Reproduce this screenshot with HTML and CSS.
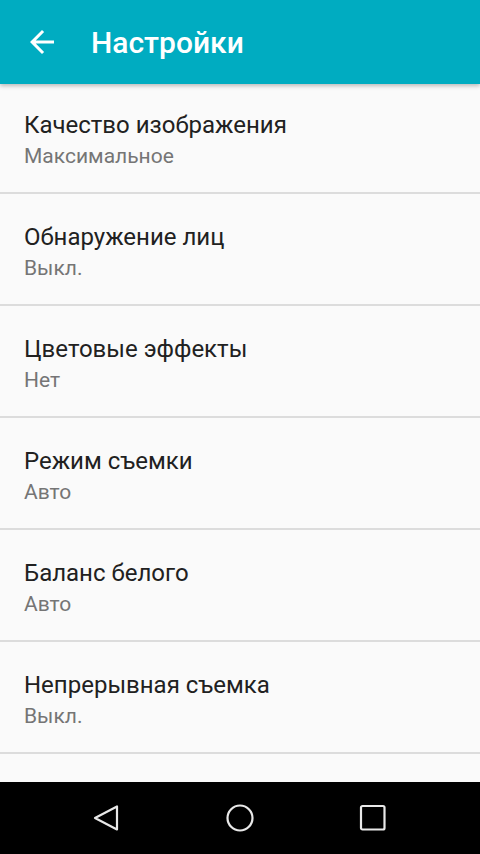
FILE: index.html
```html
<!DOCTYPE html>
<html lang="ru">
<head>
  <meta charset="UTF-8" />
  <meta name="viewport" content="width=device-width, initial-scale=1.0"/>
  <title>Настройки</title>
  <link rel="stylesheet" href="styles.css">
</head>
<body>
  <div class="screen">
    <header class="appbar">
      <svg class="back" viewBox="0 0 24 24" width="36" height="36">
        <path d="M20 11H7.83l5.59-5.59L12 4l-8 8 8 8 1.41-1.41L7.83 13H20v-2z" fill="#fff"/>
      </svg>
      <h1 class="title">Настройки</h1>
    </header>

    <main class="list">
      <div class="pref">
        <div class="pref-title">Качество изображения</div>
        <div class="pref-summary">Максимальное</div>
      </div>
      <div class="pref">
        <div class="pref-title">Обнаружение лиц</div>
        <div class="pref-summary">Выкл.</div>
      </div>
      <div class="pref">
        <div class="pref-title">Цветовые эффекты</div>
        <div class="pref-summary">Нет</div>
      </div>
      <div class="pref">
        <div class="pref-title">Режим съемки</div>
        <div class="pref-summary">Авто</div>
      </div>
      <div class="pref">
        <div class="pref-title">Баланс белого</div>
        <div class="pref-summary">Авто</div>
      </div>
      <div class="pref">
        <div class="pref-title">Непрерывная съемка</div>
        <div class="pref-summary">Выкл.</div>
      </div>
    </main>

    <nav class="navbar">
      <svg class="nav-icon" viewBox="0 0 28 28" width="28" height="28">
        <path d="M2 14 L24 2.5 L24 25.5 Z" fill="none" stroke="#e8e8e8" stroke-width="2.2" stroke-linejoin="round"/>
      </svg>
      <svg class="nav-icon" viewBox="0 0 28 28" width="28" height="28">
        <circle cx="14" cy="14" r="12.5" fill="none" stroke="#e8e8e8" stroke-width="2.2"/>
      </svg>
      <svg class="nav-icon" viewBox="0 0 28 28" width="28" height="28">
        <rect x="2" y="2" width="23.5" height="23.5" rx="1.5" fill="none" stroke="#e8e8e8" stroke-width="2.2"/>
      </svg>
    </nav>
  </div>
</body>
</html>
```

FILE: styles.css
```css
html, body {
  margin: 0;
  padding: 0;
}
body {
  background-color: #fafafa;
  font-family: Roboto, "Noto Sans", sans-serif;
}
.screen {
  display: flex;
  flex-direction: column;
  height: 854px;
  overflow: hidden;
}
.appbar {
  position: relative;
  z-index: 2;
  flex: 0 0 84px;
  display: flex;
  align-items: center;
  background-color: #00acc1;
  box-shadow: 0 2px 4px rgba(0, 0, 0, 0.25);
}
.back {
  margin-left: 24px;
  margin-right: 31px;
}
.title {
  margin: 0;
  color: #fff;
  font-size: 30px;
  font-weight: 500;
}
.list {
  flex: 1;
  overflow: hidden;
  margin-top: -2px;
}
.pref {
  box-sizing: border-box;
  height: 112px;
  padding: 29px 24px 0 24px;
  border-bottom: 2px solid #dcdcdc;
}
.pref-title {
  font-size: 24px;
  line-height: 28px;
  color: #212121;
}
.pref-summary {
  margin-top: 5px;
  font-size: 21px;
  line-height: 24px;
  color: #757575;
}
.navbar {
  flex: 0 0 72px;
  display: flex;
  align-items: center;
  justify-content: center;
  gap: 105px;
  background-color: #000;
}
.nav-icon {
  display: block;
}
```
